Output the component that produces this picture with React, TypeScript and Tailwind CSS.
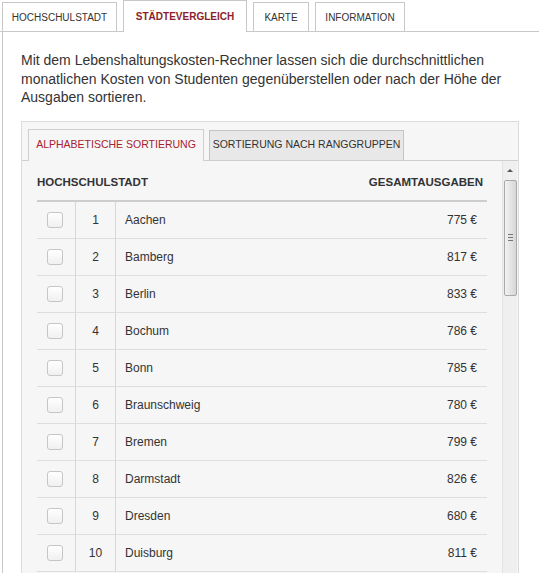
import React from "react";

const cities = [
  { nr: 1, name: "Aachen", total: 775 },
  { nr: 2, name: "Bamberg", total: 817 },
  { nr: 3, name: "Berlin", total: 833 },
  { nr: 4, name: "Bochum", total: 786 },
  { nr: 5, name: "Bonn", total: 785 },
  { nr: 6, name: "Braunschweig", total: 780 },
  { nr: 7, name: "Bremen", total: 799 },
  { nr: 8, name: "Darmstadt", total: 826 },
  { nr: 9, name: "Dresden", total: 680 },
  { nr: 10, name: "Duisburg", total: 811 },
];

function TopTab({ label, active, width }: { label: string; active?: boolean; width: string }) {
  if (active) {
    return (
      <div
        className={`${width} relative z-10 -mb-px flex h-[32px] items-center justify-center border border-b-0 border-[#c8c8c8] bg-white text-[10px] font-bold text-[#8b1d2c]`}
      >
        {label}
      </div>
    );
  }
  return (
    <div
      className={`${width} flex h-[29px] items-center justify-center border border-b-0 border-[#c8c8c8] bg-white text-[10px] text-[#333]`}
    >
      {label}
    </div>
  );
}

function Checkbox() {
  return (
    <div className="h-[16px] w-[16px] rounded-[3px] border border-[#c6c6c6] bg-gradient-to-b from-white to-[#f0f0f0]" />
  );
}

function Scrollbar() {
  return (
    <div className="flex w-[15px] flex-col items-center bg-[#efeff0] border-l border-[#e4e4e4]">
      {/* pfeil oben */}
      <div className="mt-[8px] h-0 w-0 border-x-[3px] border-b-[3px] border-x-transparent border-b-[#555]" />
      {/* thumb */}
      <div className="mt-[8px] flex h-[116px] w-[13px] items-center justify-center rounded-[2px] border border-[#a9a9a9] bg-gradient-to-r from-[#f2f2f2] via-[#e4e4e4] to-[#d6d6d6]">
        <div className="flex flex-col gap-[2px]">
          <div className="h-px w-[5px] bg-[#777]" />
          <div className="h-px w-[5px] bg-[#777]" />
          <div className="h-px w-[5px] bg-[#777]" />
        </div>
      </div>
    </div>
  );
}

export default function App() {
  return (
    <div className="h-[573px] w-[539px] overflow-hidden bg-white font-['Liberation_Sans',Arial,sans-serif] text-[#333]">
      {/* Haupt-Tabs */}
      <div className="flex h-[32px] items-end gap-[6px] border-b border-[#c8c8c8] pl-[2px]">
        <TopTab label="HOCHSCHULSTADT" width="w-[115px]" />
        <TopTab label="STÄDTEVERGLEICH" width="w-[124px]" active />
        <TopTab label="KARTE" width="w-[56px]" />
        <TopTab label="INFORMATION" width="w-[90px]" />
      </div>

      <div className="ml-[2px] border-l border-[#c8c8c8] pl-[18px] pr-[20px] pt-[19px]">
        <p className="text-[14px] leading-[18.5px] text-[#333]">
          Mit dem Lebenshaltungskosten-Rechner lassen sich die durchschnittlichen monatlichen Kosten von
          Studenten gegenüberstellen oder nach der Höhe der Ausgaben sortieren.
        </p>

        {/* Innerer Bereich */}
        <div className="mt-[14px] border border-[#dcdcdc] bg-[#f6f6f7]">
          <div className="flex h-[39px] items-end gap-[5px] border-b border-[#cfcfcf] pl-[6px]">
            <div className="relative z-10 -mb-px flex h-[32px] w-[176px] items-center justify-center border border-b-0 border-[#cfcfcf] bg-[#f6f6f7] text-[10.5px] text-[#a8222d]">
              ALPHABETISCHE SORTIERUNG
            </div>
            <div className="flex h-[30px] w-[195px] items-center justify-center border border-b-0 border-[#c4c4c4] bg-[#e8e8e8] text-[10.5px] text-[#333]">
              SORTIERUNG NACH RANGGRUPPEN
            </div>
          </div>

          <div className="flex h-[420px]">
            <div className="flex-1 pl-[15px] pr-[15px]">
              <div className="flex h-[41px] items-center justify-between border-b-2 border-[#cdcdcd] pl-0 pr-[4px] pt-[5px] text-[11.5px] font-bold text-[#333]">
                <span>HOCHSCHULSTADT</span>
                <span>GESAMTAUSGABEN</span>
              </div>
              {cities.map((c) => (
                <div key={c.nr} className="flex h-[37px] items-stretch border-b border-[#dedede] text-[12px]">
                  <div className="flex w-[39px] items-center justify-center border-r border-[#d6d6d6] pr-[2px]">
                    <Checkbox />
                  </div>
                  <div className="flex w-[40px] items-center justify-center border-r border-[#d6d6d6]">
                    {c.nr}
                  </div>
                  <div className="flex flex-1 items-center pl-[9px]">{c.name}</div>
                  <div className="flex items-center pr-[10px]">{c.total} €</div>
                </div>
              ))}
            </div>
            <Scrollbar />
            <div className="w-[1px]" />
          </div>
        </div>
      </div>
    </div>
  );
}
